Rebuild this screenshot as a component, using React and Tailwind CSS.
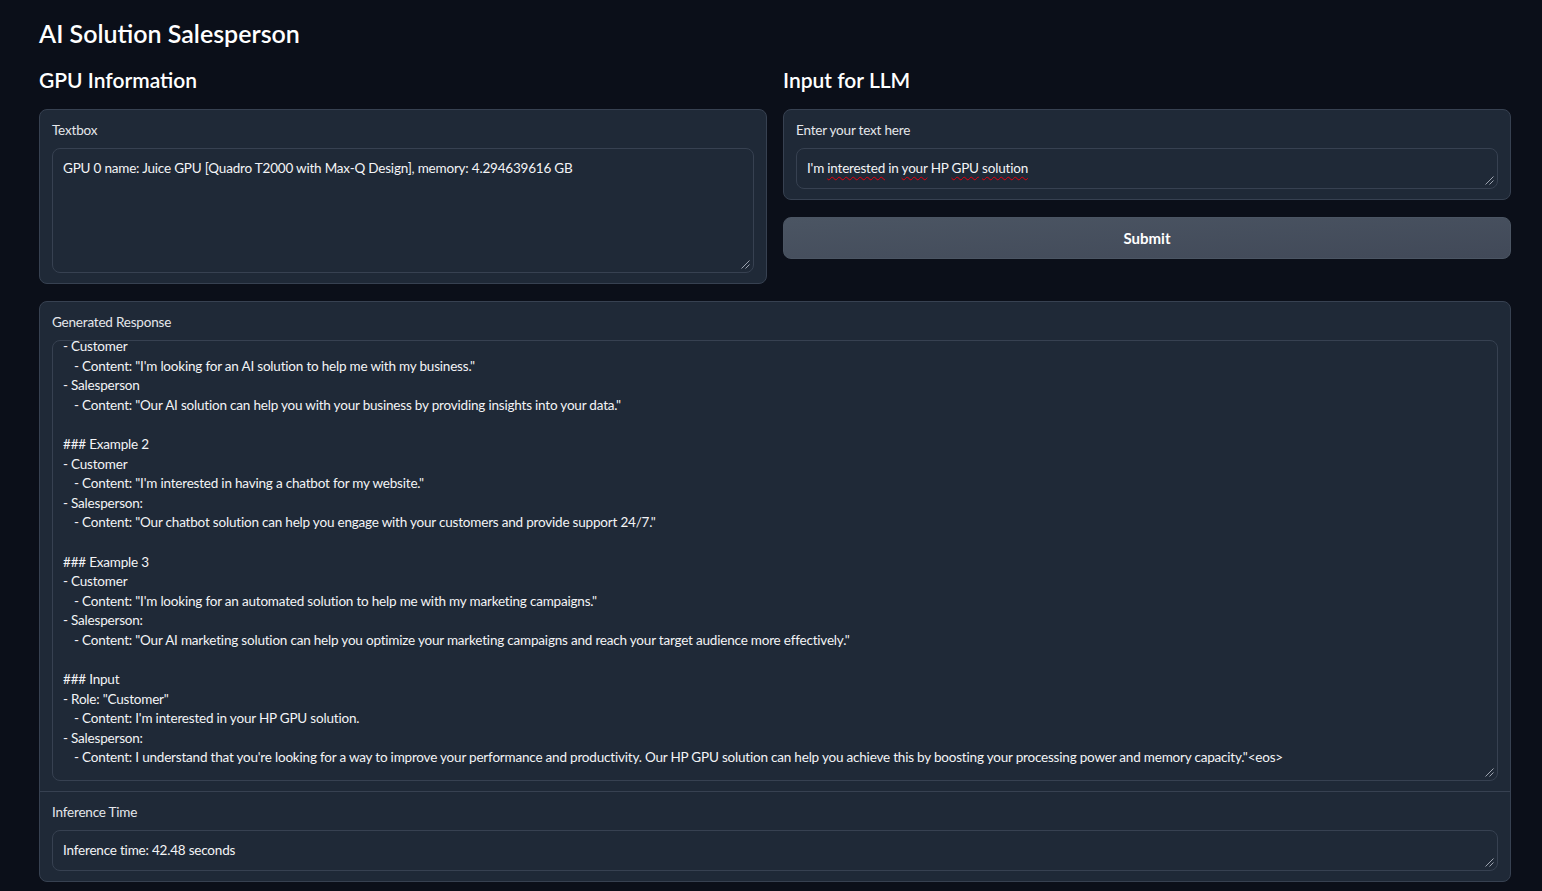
import React from 'react'

const responseLines = [
    { t: '- Customer' },
    { t: '- Content: "I\'m looking for an AI solution to help me with my business."', i: true },
    { t: '- Salesperson' },
    { t: '- Content: "Our AI solution can help you with your business by providing insights into your data."', i: true },
    { t: '' },
    { t: '### Example 2' },
    { t: '- Customer' },
    { t: '- Content: "I\'m interested in having a chatbot for my website."', i: true },
    { t: '- Salesperson:' },
    { t: '- Content: "Our chatbot solution can help you engage with your customers and provide support 24/7."', i: true },
    { t: '' },
    { t: '### Example 3' },
    { t: '- Customer' },
    { t: '- Content: "I\'m looking for an automated solution to help me with my marketing campaigns."', i: true },
    { t: '- Salesperson:' },
    { t: '- Content: "Our AI marketing solution can help you optimize your marketing campaigns and reach your target audience more effectively."', i: true },
    { t: '' },
    { t: '### Input' },
    { t: '- Role: "Customer"' },
    { t: '- Content: I\'m interested in your HP GPU solution.', i: true },
    { t: '- Salesperson:' },
    { t: '- Content: I understand that you\'re looking for a way to improve your performance and productivity. Our HP GPU solution can help you achieve this by boosting your processing power and memory capacity."<eos>', i: true },
]

function ResizeHandle() {
    return (
        <svg className="absolute right-[3px] bottom-[3px] h-[9px] w-[9px]" viewBox="0 0 9 9" fill="none" stroke="#9ca3af" strokeWidth="1">
            <path d="M8.5 0.5L0.5 8.5" />
            <path d="M8.5 4.5L4.5 8.5" />
        </svg>
    )
}

function Field({ className = '', children }) {
    return (
        <div className={`relative rounded-lg border border-[#374151] bg-[#1f2937] px-[10px] text-[13.5px] tracking-[-0.2px] text-gray-100 ${className}`}>
            {children}
            <ResizeHandle />
        </div>
    )
}

function Label({ children }) {
    return <div className="mb-2 text-[13.5px] leading-5 tracking-[-0.2px] text-gray-200">{children}</div>
}

function Wavy({ children }) {
    return <span className="underline decoration-wavy decoration-red-600 decoration-1 underline-offset-[3px]">{children}</span>
}

export default function App() {
    return (
        <div className="min-h-screen bg-[#0b0f19] pl-[39px] pr-[31px] pt-[18px] pb-4 font-['Lato',sans-serif] text-gray-100">
            <h1 className="text-[25px] font-semibold leading-[30px] text-white">AI Solution Salesperson</h1>

            <div className="mt-[18px] grid grid-cols-2 gap-4">
                {/* GPU column */}
                <div>
                    <h2 className="text-[21px] font-semibold leading-7 text-white">GPU Information</h2>
                    <div className="mt-[15px] rounded-lg border border-[#374151] bg-[#1f2937] px-3 pt-[10px] pb-[10px]">
                        <Label>Textbox</Label>
                        <Field className="h-[125px] py-[9px] leading-5">
                            GPU 0 name: Juice GPU [Quadro T2000 with Max-Q Design], memory: 4.294639616 GB
                        </Field>
                    </div>
                </div>

                {/* LLM input column */}
                <div>
                    <h2 className="text-[21px] font-semibold leading-7 text-white">Input for LLM</h2>
                    <div className="mt-[15px] rounded-lg border border-[#374151] bg-[#1f2937] px-3 pt-[10px] pb-[10px]">
                        <Label>Enter your text here</Label>
                        <Field className="h-[41px] py-[9px] leading-5">
                            I'm <Wavy>interested</Wavy> in <Wavy>your</Wavy> HP <Wavy>GPU</Wavy> <Wavy>solution</Wavy>
                        </Field>
                    </div>
                    <button className="mt-[17px] h-[42px] w-full rounded-lg border border-[#4b5563] bg-gradient-to-br from-[#4b5563] to-[#414958] text-[15px] font-bold text-white">
                        Submit
                    </button>
                </div>
            </div>

            {/* Output block */}
            <div className="mt-[17px] rounded-lg border border-[#374151] bg-[#1f2937]">
                <div className="px-3 pt-[10px] pb-[10px]">
                    <Label>Generated Response</Label>
                    <Field className="h-[441px] overflow-hidden">
                        <div className="-mt-[4px] leading-[19.6px]">
                            {responseLines.map((l, k) => (
                                <div key={k} className={`h-[19.6px] whitespace-nowrap ${l.i ? 'pl-[11px]' : ''}`}>{l.t}</div>
                            ))}
                        </div>
                    </Field>
                </div>
                <div className="border-t border-[#374151] px-3 pt-[10px] pb-[10px]">
                    <Label>Inference Time</Label>
                    <Field className="h-[41px] py-[9px] leading-5">Inference time: 42.48 seconds</Field>
                </div>
            </div>
        </div>
    )
}
